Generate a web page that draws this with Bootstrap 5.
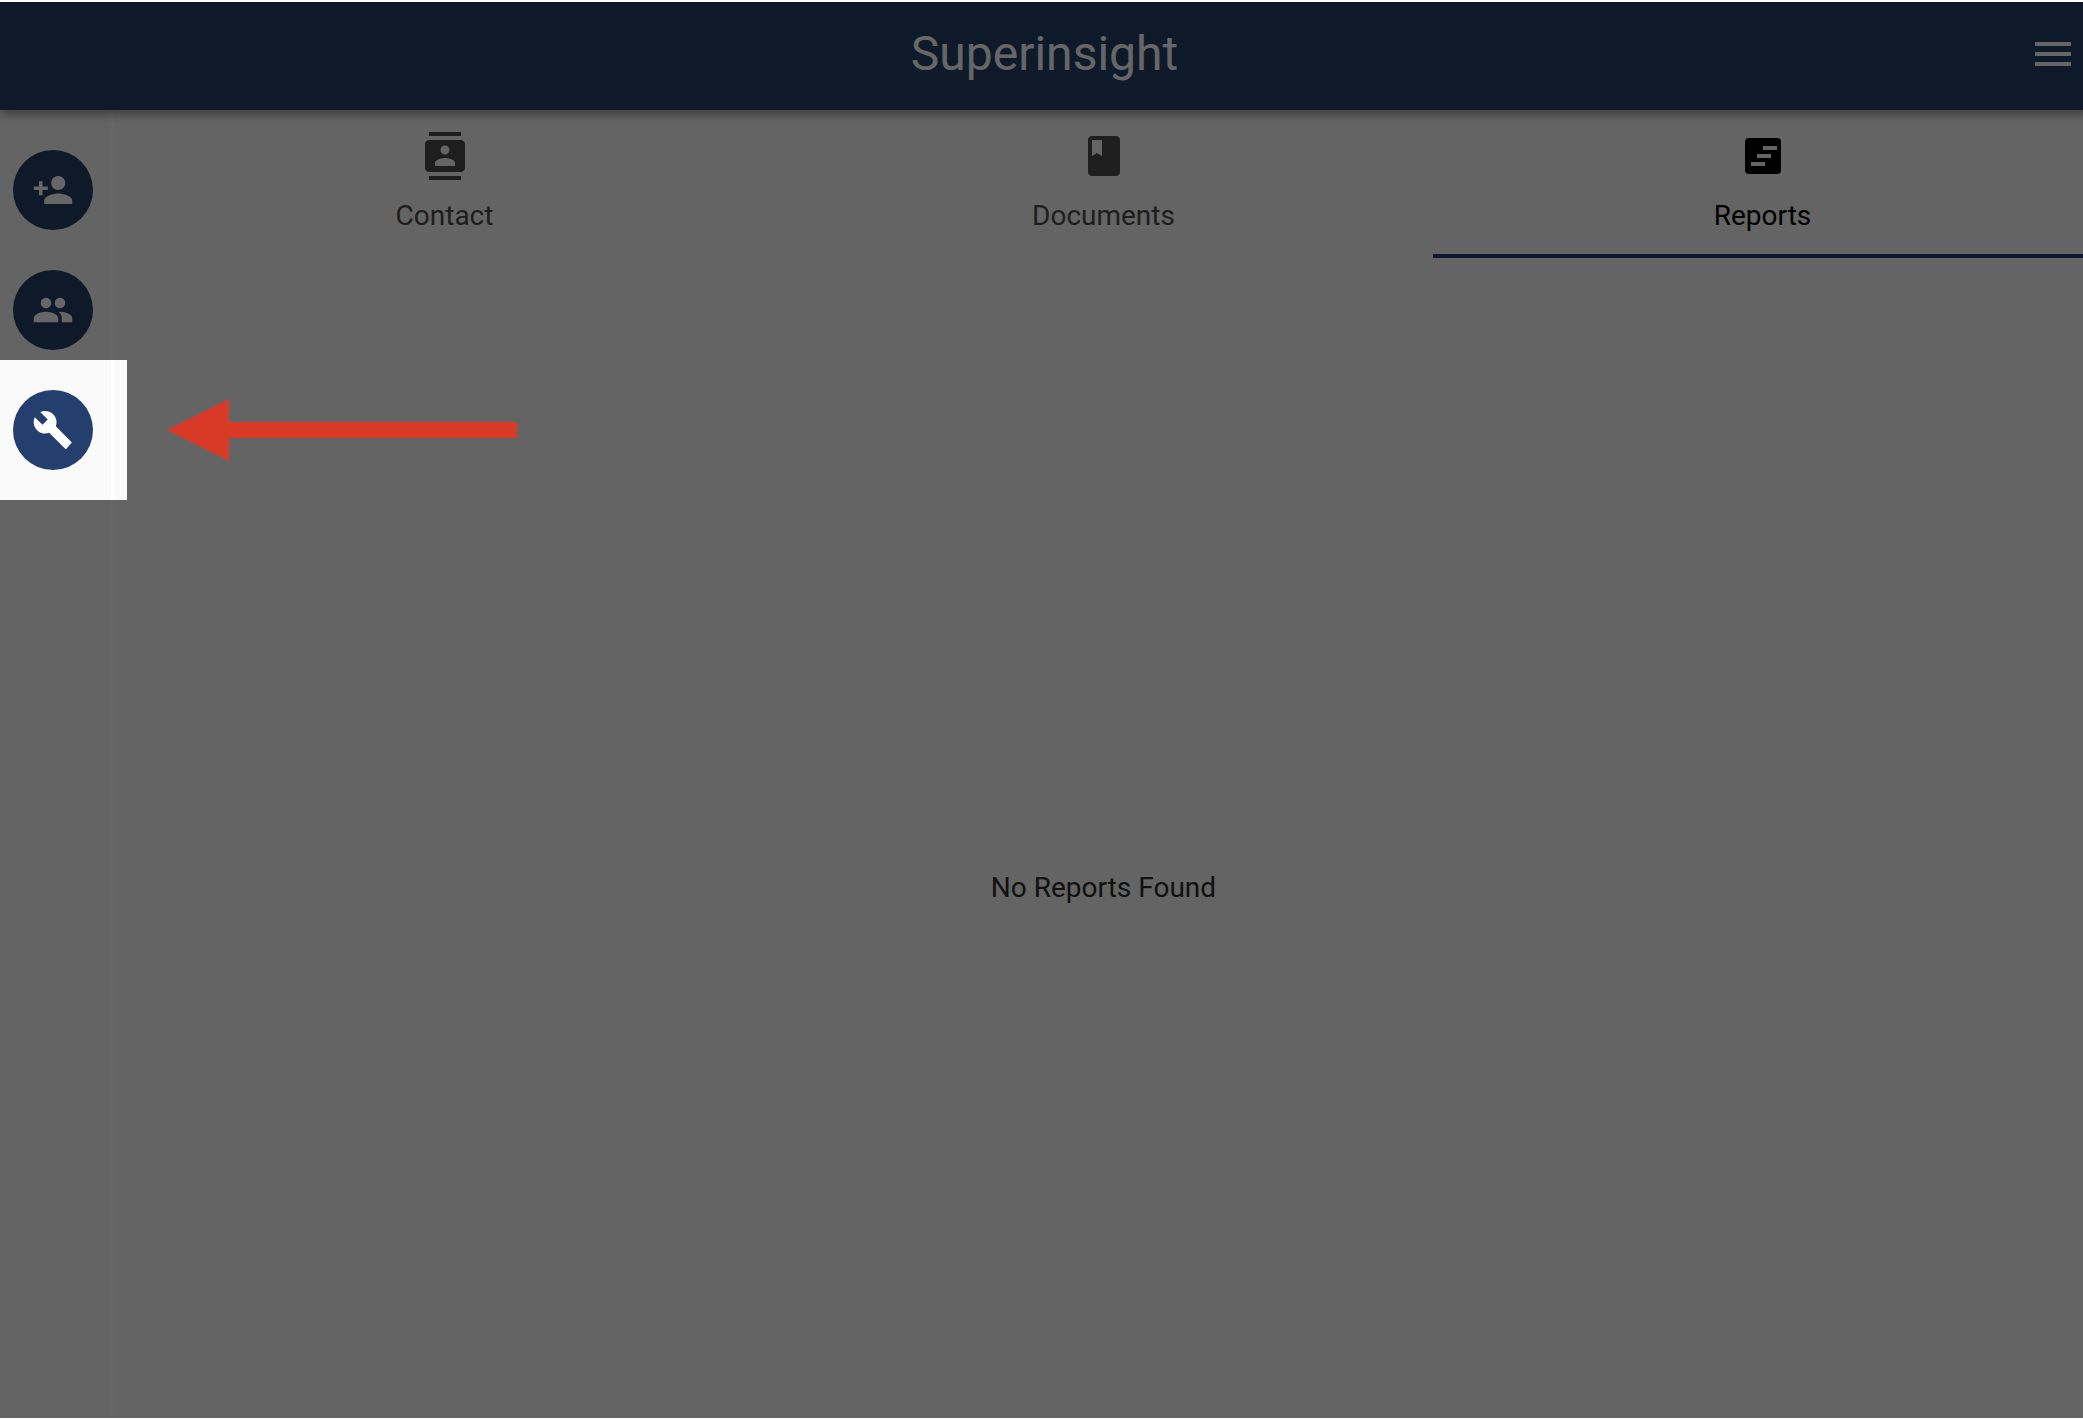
<!DOCTYPE html>
<html lang="en">
<head>
<meta charset="utf-8">
<meta name="viewport" content="width=device-width, initial-scale=1">
<title>Superinsight</title>
<link href="https://cdn.jsdelivr.net/npm/bootstrap@5.3.0/dist/css/bootstrap.min.css" rel="stylesheet">
<style>
  :root { --navy: #243e6e; --navy-deep: #243f69; --paper: #fafafa; }
  body { font-family: Roboto, "Liberation Sans", sans-serif; background: #fff; padding: 2px 0; }
  svg { display: block; fill: currentColor; }
  .app-clip { min-height: calc(100vh - 4px); background: var(--paper); }
  /* the workspace runs slightly past the right edge of the window */
  .app-shell { margin-right: -9px; }
  .app-header {
    display: grid; grid-template-columns: 1fr auto 1fr; align-items: center;
    height: 108px; padding: 0 15px 4px 12px;
    background: var(--navy-deep); color: #fff;
    box-shadow: 0 4px 10px rgba(0, 0, 0, .4); z-index: 2;
  }
  .app-title { grid-column: 2; font-size: 48px; line-height: 56px; font-weight: 400; }
  .menu-btn { justify-self: end; border: 0; background: none; color: inherit; }
  .rail { width: 115px; padding: 40px 0 0 13px; gap: 40px; border-right: 4px solid #fff; }
  .rail-btn { width: 80px; height: 80px; background: var(--navy-deep); color: #fff; }
  .rail-btn.current { background: var(--navy); }
  .tab-btn {
    padding: 22px 0; gap: 20px; font-size: 28px; line-height: 32px;
    color: #4b4b4b; background: none; border: 0; border-bottom: 4px solid transparent;
  }
  .tab-btn.active { color: #000; border-bottom-color: var(--navy); }
  .empty-state { font-size: 28px; line-height: 32px; color: #2b2b2b; padding-top: 100px; }
  /* guided tour: everything but the cut-out is dimmed */
  .tour-spot {
    left: -13px; top: -30px; width: 127px; height: 140px; z-index: 10;
    box-shadow: 0 0 0 9999px rgba(0, 0, 0, .6); pointer-events: none;
  }
  .tour-arrow { left: 167px; top: 39px; color: #d93a27; }
</style>
<script src="https://cdn.jsdelivr.net/npm/bootstrap@5.3.0/dist/js/bootstrap.bundle.min.js" defer></script>
</head>
<body>
<div class="app-clip d-flex flex-column overflow-hidden">
  <div class="app-shell d-flex flex-column flex-grow-1">
    <header class="app-header position-relative">
      <h1 class="app-title m-0">Superinsight</h1>
      <button type="button" class="menu-btn p-0" aria-label="Menu">
        <svg width="48" height="48" viewBox="0 0 24 24"><path d="M3 18h18v-2H3v2zm0-5h18v-2H3v2zm0-7v2h18V6H3z"/></svg>
      </button>
    </header>
    <div class="d-flex flex-grow-1">
      <nav class="rail d-flex flex-column flex-shrink-0" aria-label="Tools">
        <button type="button" class="rail-btn btn rounded-circle border-0 p-0 d-flex align-items-center justify-content-center" aria-label="Add contact">
          <svg width="42" height="42" viewBox="0 0 24 24"><path d="M15 12c2.21 0 4-1.79 4-4s-1.79-4-4-4-4 1.79-4 4 1.79 4 4 4zm-9-2V7H4v3H1v2h3v3h2v-3h3v-2H6zm9 4c-2.67 0-8 1.34-8 4v2h16v-2c0-2.66-5.33-4-8-4z"/></svg>
        </button>
        <button type="button" class="rail-btn btn rounded-circle border-0 p-0 d-flex align-items-center justify-content-center" aria-label="Contacts">
          <svg width="42" height="42" viewBox="0 0 24 24"><path d="M16 11c1.66 0 2.99-1.34 2.99-3S17.66 5 16 5s-3 1.34-3 3 1.34 3 3 3zm-8 0c1.66 0 2.99-1.34 2.99-3S9.66 5 8 5 5 6.34 5 8s1.34 3 3 3zm0 2c-2.33 0-7 1.17-7 3.5V19h14v-2.5c0-2.33-4.67-3.5-7-3.5zm8 0c-.29 0-.62.02-.97.05 1.16.84 1.97 1.97 1.97 3.45V19h6v-2.5c0-2.33-4.67-3.5-7-3.5z"/></svg>
        </button>
        <div class="position-relative">
          <button type="button" class="rail-btn current btn rounded-circle border-0 p-0 d-flex align-items-center justify-content-center" aria-label="Settings">
            <svg width="42" height="42" viewBox="0 0 24 24"><path d="M22.8 19.100L13.600 9.900c.9-2.300.4-5-1.500-6.900-2-2-5-2.400-7.400-1.300L9 6 6 9 1.600 4.700C.4 7.100.9 10.100 2.900 12.100c1.900 1.900 4.600 2.400 6.900 1.500l9.300 9.200.4 0z"/></svg>
          </button>
          <div class="tour-spot position-absolute">
            <svg class="tour-arrow position-absolute" width="350" height="62" viewBox="0 0 350 62" aria-hidden="true"><path d="M0 31L62 0V23H350V39H62V62Z"/></svg>
          </div>
        </div>
      </nav>
      <main class="d-flex flex-column flex-grow-1">
        <div class="row g-0" role="tablist">
          <button type="button" role="tab" aria-selected="false" class="tab-btn col d-flex flex-column align-items-center">
            <svg width="48" height="48" viewBox="0 0 24 24"><path d="M20 0H4v2h16V0zM4 24h16v-2H4v2zM20 4H4c-1.1 0-2 .9-2 2v12c0 1.1.9 2 2 2h16c1.1 0 2-.9 2-2V6c0-1.1-.9-2-2-2zm-8 2.750c1.240 0 2.250 1.010 2.250 2.250s-1.010 2.250-2.250 2.250S9.750 10.240 9.750 9 10.760 6.750 12 6.750zM17 17H7v-1.500c0-1.670 3.330-2.500 5-2.500s5 .830 5 2.500V17z"/></svg>
            <span>Contact</span>
          </button>
          <button type="button" role="tab" aria-selected="false" class="tab-btn col d-flex flex-column align-items-center">
            <svg width="48" height="48" viewBox="0 0 24 24"><path d="M18 2H6c-1.1 0-2 .9-2 2v16c0 1.1.9 2 2 2h12c1.1 0 2-.9 2-2V4c0-1.1-.9-2-2-2zM6 4h5v8l-2.5-1.5L6 12V4z"/></svg>
            <span>Documents</span>
          </button>
          <button type="button" role="tab" aria-selected="true" class="tab-btn active col d-flex flex-column align-items-center">
            <svg width="48" height="48" viewBox="0 0 24 24"><path fill-rule="evenodd" d="M5 3h14a2 2 0 0 1 2 2v14a2 2 0 0 1-2 2H5a2 2 0 0 1-2-2V5a2 2 0 0 1 2-2zM12 7v2h7V7zM9 11v2h7v-2zM6 15v2h7v-2z"/></svg>
            <span>Reports</span>
          </button>
        </div>
        <div class="empty-state flex-grow-1 d-flex align-items-center justify-content-center" role="tabpanel">
          <p class="m-0">No Reports Found</p>
        </div>
      </main>
    </div>
  </div>
</div>
</body>
</html>
